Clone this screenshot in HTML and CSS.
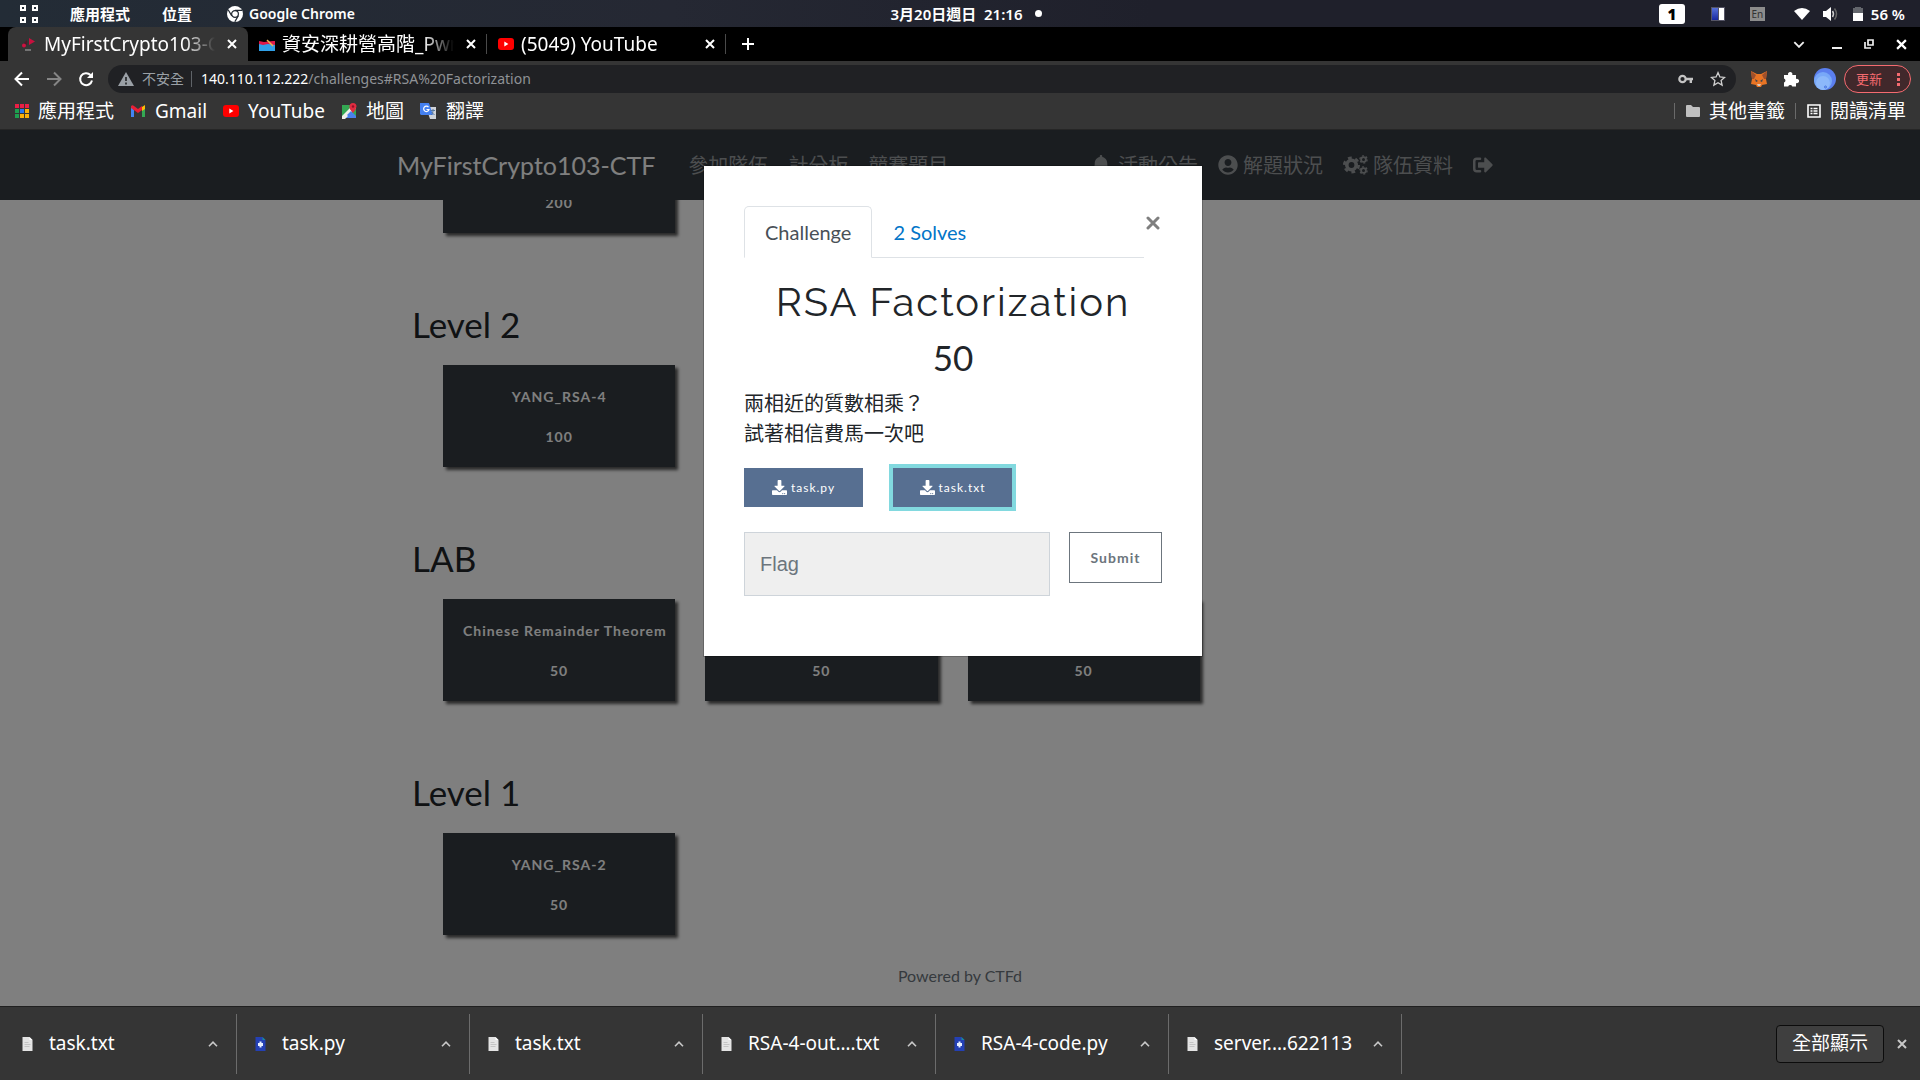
FILE: index.html
```html
<!DOCTYPE html>
<html lang="zh-Hant">
<head>
<meta charset="utf-8">
<title>MyFirstCrypto103-CTF</title>
<link rel="stylesheet" href="styles.css">
</head>
<body>
<svg class="defs" aria-hidden="true">
  <symbol id="x" viewBox="0 0 10 10"><path d="M1 1l8 8M9 1L1 9" fill="none" stroke="currentColor" stroke-width="2"/></symbol>
  <symbol id="youtube" viewBox="0 0 16 12"><rect width="16" height="12" rx="3" fill="#f00"/><path d="M6.3 3.6v4.8L10.4 6z" fill="#fff"/></symbol>
  <symbol id="up" viewBox="0 0 10 6"><path d="M1 5.2l4-4 4 4" fill="none" stroke="currentColor" stroke-width="1.6"/></symbol>
  <symbol id="doc" viewBox="0 0 12 14"><path d="M1 0h7l3 3v11H1z" fill="#e4e4e4"/><path d="M8 0l3 3H8z" fill="#fff"/><path d="M3 5.500h4M3 7.500h6M3 9.500h5" stroke="#c4c4c4" fill="none"/></symbol>
  <symbol id="pydoc" viewBox="0 0 12 14"><path d="M1 0h7l3 3v11H1z" fill="#2440b4"/><path d="M8 0l3 3H8z" fill="#1a8a9a"/><path d="M5 4.500h2V6h1.500v3H7v1.500H5V9H3.500V6H5z" fill="#e8efff"/></symbol>
  <symbol id="download" viewBox="0 0 512 512"><path fill="currentColor" d="M216 0h80c13.300 0 24 10.700 24 24v168h87.700c17.800 0 26.700 21.500 14.100 34.100L269.700 378.300c-7.500 7.500-19.800 7.500-27.300 0L90.100 226.100c-12.600-12.600-3.700-34.100 14.100-34.100H192V24c0-13.300 10.700-24 24-24zm296 376v112c0 13.300-10.700 24-24 24H24c-13.300 0-24-10.700-24-24V376c0-13.300 10.700-24 24-24h146.700l49 49c20.100 20.100 52.500 20.100 72.600 0l49-49H488c13.300 0 24 10.700 24 24zm-124 88c0-11-9-20-20-20s-20 9-20 20 9 20 20 20 20-9 20-20zm64 0c0-11-9-20-20-20s-20 9-20 20 9 20 20 20 20-9 20-20z"/></symbol>
</svg>

<header class="desktop-bar">
  <div class="desktop-side">
    <svg class="grid-icon" viewBox="0 0 18 18"><path d="M1 1h4v4H1zM13 1h4v4h-4zM1 13h4v4H1zM13 13h4v4h-4z" fill="none" stroke="#fff" stroke-width="2"/></svg>
    <span>應用程式</span>
    <span>位置</span>
    <span class="app-name"><svg width="16" height="16" viewBox="0 0 16 16"><circle cx="8" cy="8" r="8" fill="#fff"/><circle cx="8" cy="8" r="3.400" fill="#fff" stroke="#232a33" stroke-width="1.200"/><path d="M8 4.300h7M4.800 9.900L1.300 4M11.200 9.900l-3.400 6" stroke="#232a33" stroke-width="1.200"/></svg>Google Chrome</span>
  </div>
  <div class="clock"><time>3月20日週日&nbsp; 21:16</time><i class="dot"></i></div>
  <div class="desktop-side tray">
    <b class="workspace">1</b>
    <svg class="tray-panel" width="14" height="14" viewBox="0 0 14 14"><defs><linearGradient id="pg" x2="0" y2="1"><stop stop-color="#5570d8"/><stop offset="1" stop-color="#1828a0"/></linearGradient></defs><path d="M0 0h14v14H0z" fill="#556"/><path d="M1 1h6v12H1z" fill="url(#pg)"/><path d="M8 1h5v12H8z" fill="#fff"/></svg>
    <span class="ime">En</span>
    <svg class="tray-wifi" width="16" height="12" viewBox="0 0 16 12"><path d="M0 3Q8-3 16 3L8 12z" fill="#fff"/></svg>
    <svg class="tray-volume" width="15" height="14" viewBox="0 0 15 14"><path d="M0 4h3l5-4v14L3 10H0z" fill="#fff"/><path d="M9.500 4q2 3 0 6" stroke="#ccc" stroke-width="1.500" fill="none"/><path d="M11.500 1.500q4 5.500 0 11" stroke="#666" stroke-width="1.500" fill="none"/></svg>
    <svg class="tray-battery" width="10" height="14" viewBox="0 0 10 14"><path d="M2 0h6v1h2v6H0V1h2z" fill="#63666c"/><path d="M0 6h10v8H0z" fill="#fff"/></svg>
    <span>56 %</span>
  </div>
</header>

<div class="tab-strip">
  <div class="tab tab-active">
    <svg width="16" height="16" viewBox="0 0 16 16"><path d="M8 2l6 3.500L8 9z" fill="#c8103e"/><circle cx="3" cy="9.500" r="2" fill="#d01040"/><path d="M4 14h6" stroke="#888" stroke-width="1.500"/><path d="M3 7l3-3v5z" fill="#501828"/></svg>
    <span class="tab-title">MyFirstCrypto103-CTF</span>
    <button class="plain" aria-label="關閉"><svg width="10" height="10"><use href="#x"/></svg></button>
  </div>
  <div class="tab">
    <svg width="16" height="16" viewBox="0 0 16 16"><path d="M0 5l5 1 9-1h2v4H0z" fill="#e01848"/><path d="M0 8l4 1 5-1 7 1v6H0z" fill="#30a0e8"/><path d="M8 4l6 6" stroke="#f0b050" stroke-width="1.500"/></svg>
    <span class="tab-title">資安深耕營高階_Pwn</span>
    <button class="plain" aria-label="關閉"><svg width="10" height="10"><use href="#x"/></svg></button>
  </div>
  <div class="tab">
    <svg width="16" height="12"><use href="#youtube"/></svg>
    <span class="tab-title">(5049) YouTube</span>
    <button class="plain" aria-label="關閉"><svg width="10" height="10"><use href="#x"/></svg></button>
  </div>
  <button class="plain new-tab" aria-label="新分頁"><svg width="12" height="12" viewBox="0 0 12 12"><path d="M6 0v12M0 6h12" stroke="#fff" stroke-width="2"/></svg></button>
  <div class="window-controls">
    <button class="plain tab-search" aria-label="搜尋分頁"><svg width="12" height="7" viewBox="0 0 10 6"><path d="M1 1l4 4 4-4" fill="none" stroke="#eee" stroke-width="1.600"/></svg></button>
    <button class="plain" aria-label="最小化"><svg width="10" height="10" viewBox="0 0 10 10"><path d="M0 9h10" stroke="#eee" stroke-width="2"/></svg></button>
    <button class="plain" aria-label="還原"><svg width="10" height="10" viewBox="0 0 10 10"><path d="M4 1h5v5H4zM1 3v6h6" fill="none" stroke="#eee" stroke-width="1.700"/></svg></button>
    <button class="plain" aria-label="關閉視窗"><svg width="11" height="11"><use href="#x"/></svg></button>
  </div>
</div>

<div class="toolbar">
  <button class="plain" aria-label="上一頁"><svg width="16" height="16" viewBox="0 0 16 16"><path d="M15 8H2M8 1.500L1.500 8 8 14.500" fill="none" stroke="#fff" stroke-width="2"/></svg></button>
  <button class="plain" aria-label="下一頁"><svg width="16" height="16" viewBox="0 0 16 16"><path d="M1 8h13M8 1.500L14.500 8 8 14.500" fill="none" stroke="#858585" stroke-width="2"/></svg></button>
  <button class="plain" aria-label="重新載入"><svg width="16" height="16" viewBox="0 0 16 16"><path d="M14 9.500A6 6 0 1 1 12.500 4" fill="none" stroke="#fff" stroke-width="2"/><path d="M15 1v6H9z" fill="#fff"/></svg></button>
  <div class="omnibox">
    <svg width="16" height="14" viewBox="0 0 16 14"><path d="M8 0l8 14H0z" fill="#9aa0a6"/><path d="M8 5v4M8 10.500v2" stroke="#202124" stroke-width="1.600"/></svg>
    <span class="insecure">不安全</span>
    <div class="url" role="textbox" aria-label="網址"><span class="host">140.110.112.222</span>/challenges#RSA%20Factorization</div>
    <svg width="16" height="10" viewBox="0 0 16 10"><circle cx="4.500" cy="5" r="3.200" fill="none" stroke="#c4c4c4" stroke-width="2.200"/><path d="M7.500 5H15M12.800 5v4" stroke="#c4c4c4" stroke-width="2.400"/></svg>
    <svg width="16" height="16" viewBox="0 0 16 16"><path d="M8 1.600l1.900 4.300 4.700.5-3.500 3.100 1 4.600L8 11.700l-4.100 2.400 1-4.600L1.400 6.400l4.700-.5z" fill="none" stroke="#d0d0d0" stroke-width="1.300"/></svg>
  </div>
  <svg class="ext" width="18" height="16" viewBox="0 0 18 16"><path d="M1 0l6 3h4l6-3-1 8 1 5-5 1-1 2H7l-1-2-5-1 1-5z" fill="#e87424"/><path d="M1 0l5 4-2 4-2 0zM17 0l-5 4 2 4 2 0z" fill="#a0502c"/><path d="M5 8l3 2-2 1zM13 8l-3 2 2 1z" fill="#3a4450"/><path d="M7 13h4l-1 2H8z" fill="#dcc8b8"/></svg>
  <svg class="ext" width="16" height="16" viewBox="0 0 16 16"><path d="M1 4h4.200a2.200 2.200 0 1 1 4 0H13v4a2.200 2.200 0 1 1 0 4v3.500H9.300a2.200 2.200 0 0 0-4.100 0H1v-4a2.100 2.100 0 0 0 0-4z" fill="#fff"/></svg>
  <svg class="avatar" width="22" height="22" viewBox="0 0 22 22"><circle cx="11" cy="11" r="11" fill="#5b7fee"/><circle cx="9" cy="13" r="9" fill="#78a8f8"/><circle cx="9" cy="15" r="7" fill="#8cb8fa"/><circle cx="11.500" cy="19" r="1" fill="none" stroke="#4470e0"/></svg>
  <button class="update">更新<svg width="3" height="13" viewBox="0 0 3 13"><path d="M0 0h3v3H0zM0 5h3v3H0zM0 10h3v3H0z" fill="#f56b70"/></svg></button>
</div>

<nav class="bookmarks">
  <a href="#"><svg width="14" height="14" viewBox="0 0 14 14"><path d="M0 0h4v4H0zM5 0h4v4H5zM10 0h4v4h-4z" fill="#ea1f45"/><path d="M0 5h4v4H0zM0 10h4v4H0z" fill="#1ea050"/><path d="M5 5h4v4H5z" fill="#2878f0"/><path d="M5 10h4v4H5zM10 5h4v4h-4zM10 10h4v4h-4z" fill="#fbb008"/></svg>應用程式</a>
  <a href="#"><svg width="16" height="12" viewBox="0 0 16 12"><path d="M1 1v11h3V5z" fill="#4285f4"/><path d="M15 1v11h-3V5z" fill="#34a853"/><path d="M12 2l3-2v4l-3 2z" fill="#fbbc04"/><path d="M1 1.500Q2-.5 4 1l4 3 4-3v4L8 8 1 3z" fill="#ea1f35"/></svg>Gmail</a>
  <a href="#"><svg width="16" height="12"><use href="#youtube"/></svg>YouTube</a>
  <a href="#"><svg width="16" height="16" viewBox="0 0 16 16"><path d="M1 2h14v13H1z" fill="#34a853"/><path d="M1 15L8 8l7 7z" fill="#4a80ec"/><path d="M1 13L12 2l3 3L4 16H1z" fill="#f0f0e8"/><path d="M6 12l4-4 5 5v2H9z" fill="#4a80ec"/><path d="M12 10Q8 6 8.500 3.500a3.500 3.500 0 0 1 7 0Q15 7 12 10z" fill="#e02c40"/><circle cx="12" cy="3.500" r="1.200" fill="#901028"/></svg>地圖</a>
  <a href="#"><svg width="17" height="16" viewBox="0 0 17 16"><path d="M6 4h10v12H10z" fill="#d0d4da"/><path d="M0 0h9l4 12H1L0 11z" fill="#4480f0"/><path d="M8.500 4.200A2.700 2.700 0 1 0 9 6.500H6.500" fill="none" stroke="#fff" stroke-width="1.200"/><path d="M10.500 7.500H15M13 6v2q0 3-2 4M11.500 9l3 3" stroke="#5878a0" fill="none"/></svg>翻譯</a>
  <a class="bookmarks-end" href="#"><svg width="14" height="12" viewBox="0 0 14 12"><path d="M0 1q0-1 1-1h4l2 2h6q1 0 1 1v8q0 1-1 1H1q-1 0-1-1z" fill="#c0c0c0"/></svg>其他書籤</a>
  <a class="reading" href="#"><svg width="14" height="14" viewBox="0 0 14 14"><path d="M1 1h12v12H1z" fill="none" stroke="#fff" stroke-width="1.600"/><path d="M3.500 4.500h2M3.500 7h2M3.500 9.500h2M6.500 4.500h4M6.500 7h4M6.500 9.500h4" stroke="#fff" stroke-width="1.400"/></svg>閱讀清單</a>
</nav>

<div class="viewport">
  <nav class="navbar">
    <div class="navbar-inner">
      <a class="brand" href="#">MyFirstCrypto103-CTF</a>
      <div class="nav-links"><a href="#">參加隊伍</a><a href="#">計分板</a><a href="#">競賽題目</a></div>
      <div class="nav-links nav-right">
        <a href="#"><svg class="bell" width="18" height="20" viewBox="0 0 448 512"><path fill="currentColor" d="M224 512c35.300 0 64-28.600 64-64H160c0 35.400 28.600 64 64 64zm215.400-149.700c-19.300-20.800-55.500-52-55.500-154.300 0-77.700-54.500-139.900-127.900-155.200V32c0-17.700-14.300-32-32-32s-32 14.300-32 32v20.800C118.600 68.100 64.100 130.300 64.100 208c0 102.300-36.200 133.500-55.500 154.300-6 6.400-8.700 14.200-8.600 21.700.1 16.400 13 32 32.100 32h383.800c19.100 0 32-15.600 32.100-32 .1-7.500-2.600-15.300-8.600-21.700z"/></svg>活動公告</a>
        <a href="#"><svg width="20" height="20" viewBox="0 0 496 512"><path fill="currentColor" d="M248 8C111 8 0 119 0 256s111 248 248 248 248-111 248-248S385 8 248 8zm0 96c48.600 0 88 39.400 88 88s-39.400 88-88 88-88-39.400-88-88 39.400-88 88-88zm0 344c-58.700 0-111.300-26.600-146.500-68.200 18.800-35.400 55.600-59.800 98.500-59.800 2.400 0 4.800.4 7.100 1.100 13 4.200 26.600 6.900 40.900 6.900s28-2.700 40.900-6.900c2.300-.7 4.700-1.100 7.100-1.100 42.900 0 79.700 24.400 98.500 59.800C359.300 421.400 306.700 448 248 448z"/></svg>解題狀況</a>
        <a href="#"><svg width="25" height="20" viewBox="0 0 25 20"><g fill="none" stroke="currentColor"><circle cx="8.500" cy="10" r="4.700" stroke-width="3.600"/><circle cx="8.500" cy="10" r="7.200" stroke-width="2.600" stroke-dasharray="3.770 3.770"/><circle cx="20.500" cy="4.500" r="2.400" stroke-width="1.800"/><circle cx="20.500" cy="4.500" r="3.600" stroke-width="1.400" stroke-dasharray="1.885 1.885"/><circle cx="20.500" cy="15.500" r="2.400" stroke-width="1.800"/><circle cx="20.500" cy="15.500" r="3.600" stroke-width="1.400" stroke-dasharray="1.885 1.885"/></g></svg>隊伍資料</a>
        <a href="#" aria-label="登出"><svg width="20" height="20" viewBox="0 0 512 512"><path d="M180 96H96a64 64 0 0 0-64 64v192a64 64 0 0 0 64 64h84" fill="none" stroke="currentColor" stroke-width="64" stroke-linecap="round"/><path fill="currentColor" d="M497 273L329 441c-15 15-41 4.500-41-17v-96H152c-13.300 0-24-10.700-24-24v-96c0-13.300 10.700-24 24-24h136V88c0-21.400 25.900-32 41-17l168 168c9.300 9.400 9.300 24.600 0 34z"/></svg></a>
      </div>
    </div>
  </nav>

  <main class="challenges">
    <div class="cards"><button class="card"><span>200</span></button></div>
    <h3>Level 2</h3>
    <div class="cards"><button class="card"><span>YANG_RSA-4</span><span>100</span></button></div>
    <h3>LAB</h3>
    <div class="cards">
      <button class="card"><span>Chinese Remainder Theorem</span><span>50</span></button>
      <button class="card"><span>50</span></button>
      <button class="card"><span>50</span></button>
    </div>
    <h3>Level 1</h3>
    <div class="cards"><button class="card"><span>YANG_RSA-2</span><span>50</span></button></div>
  </main>
  <footer class="powered">Powered by CTFd</footer>

  <div class="backdrop">
    <section class="modal" role="dialog" aria-label="RSA Factorization">
      <div class="modal-head">
        <div class="modal-tabs"><a class="modal-tab current" href="#">Challenge</a><a class="modal-tab" href="#">2 Solves</a></div>
        <button class="plain modal-close" aria-label="Close"><svg width="14" height="14" viewBox="0 0 14 14"><path d="M2 2l10 10M12 2L2 12" stroke="#7f7f7f" stroke-width="3" stroke-linecap="round"/></svg></button>
      </div>
      <h2>RSA Factorization</h2>
      <h4>50</h4>
      <p>兩相近的質數相乘？<br>試著相信費馬一次吧</p>
      <div class="files">
        <a class="file" href="#"><svg width="15" height="15"><use href="#download"/></svg>task.py</a>
        <a class="file focused" href="#"><svg width="15" height="15"><use href="#download"/></svg>task.txt</a>
      </div>
      <form class="flag-form">
        <input type="text" placeholder="Flag" aria-label="Flag">
        <button type="button">Submit</button>
      </form>
    </section>
  </div>
</div>

<footer class="downloads">
  <div class="item"><svg width="13" height="14"><use href="#doc"/></svg><span>task.txt</span><button class="plain" aria-label="選單"><svg width="10" height="6"><use href="#up"/></svg></button></div>
  <div class="item"><svg width="13" height="14"><use href="#pydoc"/></svg><span>task.py</span><button class="plain" aria-label="選單"><svg width="10" height="6"><use href="#up"/></svg></button></div>
  <div class="item"><svg width="13" height="14"><use href="#doc"/></svg><span>task.txt</span><button class="plain" aria-label="選單"><svg width="10" height="6"><use href="#up"/></svg></button></div>
  <div class="item"><svg width="13" height="14"><use href="#doc"/></svg><span>RSA-4-out….txt</span><button class="plain" aria-label="選單"><svg width="10" height="6"><use href="#up"/></svg></button></div>
  <div class="item"><svg width="13" height="14"><use href="#pydoc"/></svg><span>RSA-4-code.py</span><button class="plain" aria-label="選單"><svg width="10" height="6"><use href="#up"/></svg></button></div>
  <div class="item"><svg width="13" height="14"><use href="#doc"/></svg><span>server.…622113</span><button class="plain" aria-label="選單"><svg width="10" height="6"><use href="#up"/></svg></button></div>
  <button class="show-all">全部顯示</button>
  <button class="plain close-shelf" aria-label="關閉"><svg width="10" height="10"><use href="#x"/></svg></button>
</footer>
</body>
</html>
```
FILE: styles.css
```css
* { box-sizing: border-box; }
body {
  margin: 0;
  height: 100vh;
  display: flex;
  flex-direction: column;
  overflow: hidden;
  background: #353535;
  color: #fff;
  font: 19px/24px "Noto Sans", "Noto Sans CJK TC", sans-serif;
}
a { color: inherit; text-decoration: none; }
svg { flex: none; display: block; }
.defs { position: absolute; width: 0; height: 0; }
button { font: inherit; cursor: pointer; }
.plain { padding: 0; border: 0; background: none; color: inherit; display: flex; }

/* Desktop panel */
.desktop-bar {
  height: 27px;
  flex: none;
  display: grid;
  grid-template-columns: 1fr auto 1fr;
  align-items: center;
  background: linear-gradient(90deg, #232c36, #252833 35%, #1f202b 60%, #1f202b);
  font-size: 15px;
  font-weight: 600;
}
.desktop-side { display: flex; align-items: center; gap: 32px; padding-left: 20px; }
.grid-icon { width: 18px; height: 18px; }
.app-name { display: flex; align-items: center; gap: 6px; margin-left: 3px; font-size: 14px; }
.clock { display: flex; align-items: center; gap: 12px; padding-left: 12px; }
.dot { width: 7px; height: 7px; border-radius: 50%; background: #fff; }
.tray { gap: 0; justify-content: flex-end; padding: 0 15px 0 0; }
.workspace { width: 26px; height: 20px; border-radius: 3px; background: #fff; color: #000; line-height: 20px; text-align: center; }
.tray-panel { margin: 0 25px 0 26px; }
.ime { width: 15px; height: 14px; background: #8c8c8c; color: #333; font-size: 10px; line-height: 14px; text-align: center; font-weight: 400; }
.tray-wifi { margin: 0 13px 0 29px; }
.tray-battery { margin: 0 8px 0 15px; }

/* Tab strip */
.tab-strip { height: 34px; flex: none; display: flex; align-items: center; padding: 0 13px 0 8px; background: #000; }
.tab { width: 239px; height: 100%; display: flex; align-items: center; padding: 0 11px; position: relative; }
.tab-active { width: 240px; background: #353535; border-radius: 8px 8px 0 0; padding-left: 13px; }
.tab:not(.tab-active)::after { content: ""; position: absolute; right: 0; top: 7px; height: 20px; width: 1px; background: #4a4a4a; }
.tab-title {
  flex: 1;
  min-width: 0;
  margin: 0 12px 0 7px;
  overflow: hidden;
  white-space: nowrap;
  -webkit-mask-image: linear-gradient(90deg, #000 82%, transparent);
  mask-image: linear-gradient(90deg, #000 82%, transparent);
}
.new-tab { margin-left: 16px; }
.window-controls { margin-left: auto; display: flex; align-items: center; gap: 22px; }
.tab-search { margin-right: 5px; }

/* Toolbar */
.toolbar { height: 36px; flex: none; display: flex; align-items: center; padding: 0 9px 0 14px; }
.toolbar > .plain { margin-right: 16px; }
.omnibox { flex: 1; height: 28px; display: flex; align-items: center; margin-right: 14px; margin-left: -2px; padding: 0 10px; border-radius: 14px; background: #202124; font-size: 14px; gap: 16px; }
.insecure { color: #9aa0a6; padding-right: 7px; margin-left: -8px; border-right: 1px solid #5f6368; line-height: 16px; }
.url { flex: 1; margin-left: -7px; color: #8f9296; }
.host { color: #fff; }
.ext { margin-right: 15px; }
.avatar { margin-right: 8px; }
.update { display: flex; align-items: center; gap: 15px; width: 67px; height: 28px; padding: 0 10px 0 11px; border: 1px solid #f56b70; border-radius: 14px; background: #41282b; color: #f56b70; font-size: 13px; white-space: nowrap; }

/* Bookmarks */
.bookmarks { height: 33px; flex: none; display: flex; align-items: center; gap: 16px; padding: 0 14px 5px 15px; border-bottom: 1px solid #262626; }
.bookmarks a { display: flex; align-items: center; gap: 9px; white-space: nowrap; }
.bookmarks .bookmarks-end { margin-left: auto; border-left: 1px solid #6a6a6a; padding-left: 11px; line-height: 16px; margin-right: -6px; }
.bookmarks .reading { border-left: 1px solid #6a6a6a; padding-left: 11px; line-height: 16px; }

/* Page */
.viewport { flex: 1; min-height: 0; position: relative; overflow: hidden; background: #fff; color: #212529; font-family: Lato, "Noto Sans CJK TC", sans-serif; font-size: 20px; line-height: 30px; }
.navbar { position: absolute; z-index: 1; top: 0; left: 0; right: 0; height: 70px; background: #343a40; }
.navbar-inner { max-width: 1126px; height: 100%; margin: 0 auto; display: flex; align-items: center; }
.brand { margin-right: 33px; font-size: 25px; color: #fff; }
.nav-links { display: flex; gap: 20px; color: #999c9f; }
.nav-links a { display: flex; align-items: center; gap: 5px; }
.bell { margin-right: 3px; }
.nav-right { margin-left: auto; padding-right: 30px; }

.challenges { max-width: 1096px; margin: 0 auto; padding-top: 1px; }
.challenges h3 { margin: 70px 0 20px; font-size: 35px; line-height: 42px; font-weight: 400; }
.cards { display: grid; grid-template-columns: repeat(4, 1fr); gap: 30px; margin: 0 46px 0 31px; }
.card {
  min-width: 0;
  height: 102px;
  display: flex;
  flex-direction: column;
  justify-content: flex-end;
  gap: 20px;
  padding: 21px 20px 20px;
  border: 0;
  background: #343a40;
  color: #fff;
  box-shadow: 3px 3px 3px #555;
  font-size: 14px;
  line-height: 20px;
  font-weight: 700;
  letter-spacing: 1px;
  white-space: nowrap;
  align-items: stretch;
}
.powered { margin-top: 26px; text-align: center; font-size: 16px; color: #6c757d; }

/* Challenge dialog */
.backdrop { position: absolute; z-index: 2; inset: 0; display: flex; justify-content: center; align-items: flex-start; padding: 35px 14px 0 0; background: rgba(0, 0, 0, .5); }
.modal { width: 500px; padding: 40px 40px 60px; border: 1px solid rgba(0, 0, 0, .2); background: #fff; background-clip: padding-box; }
.modal-head { display: flex; align-items: flex-start; }
.modal-tabs { flex: 1; display: flex; border-bottom: 1px solid #dee2e6; }
.modal-tab { padding: 10px 20px; margin-bottom: -1px; border: 1px solid transparent; color: #0275c8; }
.current { border-color: #dee2e6 #dee2e6 #fff; border-radius: 5px 5px 0 0; color: #495057; }
.modal-close { margin: 10px 2px 0; }
.modal h2 { margin: 20px 0 10px; text-align: center; font: 400 40px/48px Raleway, Lato, sans-serif; letter-spacing: 2px; }
.modal h4 { margin: 0 0 10px; text-align: center; font-size: 35px; line-height: 42px; font-weight: 400; }
.modal p { margin: 0 0 20px; }
.files { display: flex; gap: 30px; margin-bottom: 25px; }
.file { width: 119px; height: 39px; display: flex; justify-content: center; align-items: center; gap: 4px; background: #576f91; color: #fff; font-size: 12px; letter-spacing: 1px; }
.focused { box-shadow: 0 0 0 4px #82d9df; }
.flag-form { display: flex; align-items: flex-start; gap: 19px; }
.flag-form input { flex: 1; min-width: 0; height: 64px; padding: 0 15px; border: 1px solid #ced4da; border-radius: 0; background: #efefef; font: 20px "Liberation Sans", sans-serif; }
.flag-form input::placeholder { color: #6c757d; opacity: 1; }
.flag-form button { width: 93px; height: 51px; padding: 0; border: 1px solid #6c757d; background: #fff; color: #6c757d; font-size: 14px; font-weight: 700; letter-spacing: 1px; }

/* Downloads shelf */
.downloads { height: 74px; flex: none; display: flex; align-items: center; border-top: 1px solid #202020; padding: 0 13px 0 4px; }
.item { width: 233px; height: 60px; display: flex; align-items: center; padding: 0 18px 0 17px; border-right: 1px solid #6c6c6c; white-space: nowrap; }
.item span { flex: 1; margin-left: 15px; padding-bottom: 2px; }
.item button { color: #c8c8c8; }
.show-all { width: 108px; height: 38px; margin-left: auto; padding: 0 0 1px; border: 1px solid #0c0c0c; border-radius: 4px; background: #3f3f3f; color: #fff; white-space: nowrap; }
.close-shelf { margin-left: 13px; color: #c8c8c8; }
```
